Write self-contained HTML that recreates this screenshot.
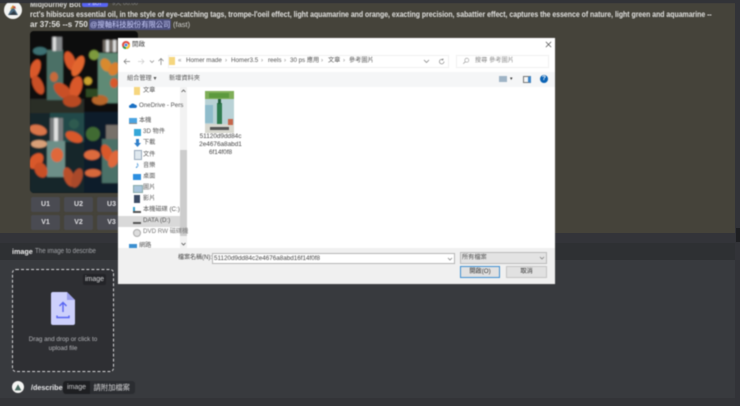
<!DOCTYPE html>
<html><head><meta charset="utf-8"><style>
html,body{margin:0;padding:0;background:#323338}
#p{position:relative;width:740px;height:406px;overflow:hidden;background:#323338;font-family:"Liberation Sans","Noto Sans CJK TC",sans-serif}
#p div{position:absolute;white-space:nowrap}
.t{font-size:6.2px;color:#555;line-height:10px}
.btn{background:#4a4b52;color:#dfdfe2;border-radius:2px;font-size:7px;font-weight:bold;text-align:center;line-height:15px;width:29px;height:15px}
.blur{filter:blur(.4px)}
.sx{transform-origin:left top}
</style></head><body><div id="p">
<div style="left:0;top:3px;width:735px;height:230px;background:#45433a"></div>
<div style="left:0;top:233px;width:735px;height:10px;background:#333439"></div>
<div style="left:0;top:243px;width:735px;height:17px;background:#2e3033"></div>
<div style="left:0;top:260px;width:735px;height:138px;background:#383a3e"></div>
<div style="left:0;top:398px;width:735px;height:8px;background:#333438"></div>
<div style="left:735px;top:0;width:5px;height:406px;background:#323338"></div>
<div style="left:736px;top:228px;width:4px;height:14px;background:#1e1f22"></div>

<div class="blur" style="left:0;top:0;width:740px;height:406px">
<svg style="position:absolute;left:4px;top:1px" width="18" height="18" viewBox="0 0 18 18"><circle cx="9" cy="9" r="9" fill="#f4f4f2"/><path d="M4 14 L9 5 L14 14Z" fill="#4a6a80"/><path d="M6 8 L9 4 L11 7Z" fill="#d9a23a"/><path d="M8 6 L11 5 L12 8Z" fill="#c4483c"/><path d="M5 14 L13 14 L10 10Z" fill="#2f3a44"/></svg>
<div class="sx" style="left:30px;top:-1px;font-size:8.5px;font-weight:bold;color:#d8d8d8;line-height:11px;transform:scaleX(.82)">Midjourney Bot</div>
<div style="left:82px;top:1px;width:26px;height:6px;background:#5865f2;border-radius:2px;color:#e8e8ff;font-size:4.500px;line-height:6px;text-align:center">✓ BOT</div>
<div style="left:112px;top:0;font-size:6px;color:#8e8f92;line-height:9px">9天 00:00</div>
<div style="left:0;top:0;width:735px;height:3px;background:#323338"></div>
<div class="sx" style="left:30px;top:9px;font-size:8.4px;font-weight:bold;color:#e2e2e0;line-height:11px;transform:scaleX(.825)">rct's hibiscus essential oil, in the style of eye-catching tags, trompe-l'oeil effect, light aquamarine and orange, exacting precision, sabattier effect, captures the essence of nature, light green and aquamarine --</div>
<div style="left:30px;top:19px;font-size:8px;font-weight:bold;color:#e2e2e0;line-height:11px">ar 37:56 --s 750 -</div>
<div style="left:89px;top:19px;width:82px;height:11px;background:#4c4f7c;border-radius:2px"></div>
<div style="left:90px;top:19px;font-size:7.300px;color:#c9cdfb;line-height:11px">@搜軸科技股份有限公司</div>
<div style="left:173px;top:19px;font-size:7.500px;color:#d0d0ce;line-height:11px">(fast)</div>

<svg style="position:absolute;left:30px;top:31px;border-radius:4px" width="108" height="162" viewBox="0 0 108 162">
<defs><filter id="f" x="-5%" y="-5%" width="110%" height="110%"><feGaussianBlur stdDeviation=".8"/></filter></defs>
<rect width="108" height="162" fill="#0b0f0e"/>
<g filter="url(#f)">
<rect x="0" y="0" width="108" height="81" fill="#0b100f"/>
<rect x="0" y="81" width="54" height="81" fill="#16282a"/><rect x="20" y="81" width="34" height="30" fill="#244a48"/><rect x="54" y="81" width="54" height="81" fill="#101f2a"/>
<rect x="0" y="68" width="54" height="14" fill="#2a2d28"/>
<rect x="17" y="19" width="16" height="50" fill="#4c6f66"/><rect x="22" y="6" width="10" height="14" fill="#85888a"/><rect x="23" y="6" width="3" height="14" fill="#ddd"/>
<rect x="68" y="22" width="20" height="50" fill="#5e8a74"/><rect x="73" y="9" width="15" height="12" fill="#6f6a62"/><rect x="76" y="9" width="3" height="12" fill="#ddd"/><rect x="83" y="9" width="3" height="12" fill="#ddd"/>
<rect x="17" y="110" width="18" height="36" fill="#6d8f88"/><rect x="20" y="87" width="13" height="23" fill="#777a7c"/><rect x="24" y="87" width="4" height="23" fill="#e0e0e0"/>
<rect x="72" y="108" width="16" height="44" fill="#4b7168"/><rect x="76" y="94" width="12" height="14" fill="#77716a"/>
<g fill="#d9592a">
<ellipse cx="5" cy="38" rx="5" ry="10" transform="rotate(20 5 38)"/><ellipse cx="8" cy="54" rx="5" ry="10" transform="rotate(-25 8 54)" fill="#c94f26"/>
<ellipse cx="40" cy="30" rx="5" ry="10" transform="rotate(-20 40 30)"/><ellipse cx="48" cy="35" rx="5" ry="11" transform="rotate(25 48 35)" fill="#e2662f"/>
<ellipse cx="33" cy="60" rx="6" ry="11" transform="rotate(-50 33 60)" fill="#c94f26"/><ellipse cx="46" cy="56" rx="6" ry="11" transform="rotate(15 46 56)"/><ellipse cx="42" cy="70" rx="9" ry="6" fill="#b84a24"/>
<ellipse cx="24" cy="46" rx="4" ry="5" fill="#c86a3a"/>
<ellipse cx="76" cy="34" rx="5" ry="7" transform="rotate(-30 76 34)" fill="#d98a2e"/><ellipse cx="84" cy="38" rx="5" ry="7" transform="rotate(30 84 38)" fill="#d9802e"/><ellipse cx="84" cy="52" rx="4" ry="5"/><ellipse cx="58" cy="50" rx="4" ry="4" fill="#c9a32e"/><ellipse cx="70" cy="69" rx="8" ry="5" fill="#b8662a"/>
<ellipse cx="8" cy="99" rx="9" ry="5" transform="rotate(15 8 99)" fill="#d9754a"/><ellipse cx="9" cy="113" rx="8" ry="4" fill="#d8a078"/>
<ellipse cx="6" cy="130" rx="6" ry="9" transform="rotate(40 6 130)"/><ellipse cx="11" cy="139" rx="6" ry="8" transform="rotate(-30 11 139)" fill="#c94f26"/>
<ellipse cx="44" cy="106" rx="9" ry="5" transform="rotate(25 44 106)"/><ellipse cx="27" cy="124" rx="6" ry="7" fill="#e0683a"/>
<ellipse cx="39" cy="146" rx="5" ry="10" transform="rotate(-20 39 146)" fill="#b9502c"/><ellipse cx="47" cy="147" rx="5" ry="10" transform="rotate(20 47 147)" fill="#a9482a"/>
<ellipse cx="62" cy="124" rx="8" ry="5" fill="#dc6a3e"/><ellipse cx="63" cy="142" rx="8" ry="4" fill="#d6683a"/><ellipse cx="77" cy="122" rx="5" ry="9" transform="rotate(-25 77 122)"/><ellipse cx="84" cy="128" rx="5" ry="9" transform="rotate(25 84 128)" fill="#e0683a"/>
</g>
<ellipse cx="64" cy="24" rx="5" ry="5" fill="#7d9a3c"/><ellipse cx="63" cy="103" rx="7" ry="7" fill="#3f6a30"/><ellipse cx="44" cy="93" rx="5" ry="5" fill="#2e5a50"/><ellipse cx="10" cy="20" rx="7" ry="4" fill="#3d6f72"/>
<rect x="56" y="58" width="12" height="8" fill="#2f4a24"/>
</g>
</svg>

<div class="btn" style="left:31px;top:197px">U1</div><div class="btn" style="left:64px;top:197px">U2</div><div class="btn" style="left:97px;top:197px">U3</div>
<div class="btn" style="left:31px;top:215px">V1</div><div class="btn" style="left:64px;top:215px">V2</div><div class="btn" style="left:97px;top:215px">V3</div>

<div style="left:12px;top:247px;font-size:7.200px;font-weight:bold;color:#eee;line-height:10px">image</div>
<div class="sx" style="left:35px;top:247px;font-size:7px;color:#a3a5a9;line-height:10px;transform:scaleX(.88)">The image to describe</div>

<div style="left:12px;top:269px;width:100px;height:101px;background:#2e2f33;border:1px dashed #d8d8da;border-radius:4px"></div>
<div style="left:83px;top:274px;width:23px;height:11px;background:#232428;border-radius:2px;color:#d8d8da;font-size:7px;line-height:11px;text-align:center">image</div>
<svg style="position:absolute;left:51px;top:292px" width="24" height="33" viewBox="0 0 24 33"><path d="M2 0H16L24 8V31a2 2 0 0 1-2 2H2a2 2 0 0 1-2-2V2a2 2 0 0 1 2-2Z" fill="#cdd0fb"/><path d="M16 0L24 8H16Z" fill="#9a9ee8"/><path d="M12 20V11M8.500 14L12 10.500L15.500 14M6 23.500V25.500H18V23.500" fill="none" stroke="#5865f2" stroke-width="1.400"/></svg>
<div style="left:13px;top:335px;width:100px;text-align:center;font-size:6.300px;color:#b5b6ba;line-height:9px;white-space:normal">Drag and drop or click to<br>upload file</div>

<svg style="position:absolute;left:12px;top:381px" width="12" height="12" viewBox="0 0 18 18"><circle cx="9" cy="9" r="9" fill="#f4f4f2"/><path d="M4 14 L9 5 L14 14Z" fill="#4a6a60"/></svg>
<div style="left:31px;top:382px;font-size:7.200px;font-weight:bold;color:#e6e6e8;line-height:11px">/describe</div>
<div style="left:63px;top:381px;width:72px;height:13px;background:#2b2d31;border-radius:3px"></div>
<div style="left:63px;top:381px;width:27px;height:13px;background:#1e1f22;border-radius:3px 0 0 3px;color:#c9cacc;font-size:7px;line-height:13px;text-align:center">image</div>
<div style="left:93.500px;top:381px;font-size:7.300px;color:#d6d6d8;line-height:13px">請附加檔案</div>

<!-- dialog -->
<div style="left:118px;top:38px;width:437px;height:246px;background:#fff;box-shadow:0 0 1px #666"></div>
<svg style="position:absolute;left:122px;top:41px" width="8" height="8" viewBox="0 0 8 8"><circle cx="4" cy="4" r="4" fill="#dd4b3e"/><path d="M4 4L0.600 6.200A4 4 0 0 0 7.400 6.200Z" fill="#2f9e4f"/><path d="M4 4L7.900 3A4 4 0 0 1 4 8Z" fill="#f3c13a"/><circle cx="4" cy="4" r="1.700" fill="#3f7ee0" stroke="#fff" stroke-width=".6"/></svg>
<div class="t" style="left:132px;top:40px;font-size:6.500px;color:#444">開啟</div>
<svg style="position:absolute;left:545px;top:41px" width="7" height="7" viewBox="0 0 8 8"><path d="M1 1L7 7M7 1L1 7" stroke="#444" stroke-width=".8"/></svg>
<svg style="position:absolute;left:122px;top:57px" width="44" height="9" viewBox="0 0 44 9" fill="none"><path d="M8 4.500H2M4.500 2L2 4.500L4.500 7" stroke="#777" stroke-width=".7"/><path d="M22 4.500H16M19.500 2L22 4.500L19.500 7" stroke="#ccc" stroke-width=".7"/><path d="M28 3.500L30 5.500L32 3.500" stroke="#888" stroke-width=".7"/><path d="M39 8V1.500M36.500 4L39 1.500L41.500 4" stroke="#777" stroke-width=".7"/></svg>
<div style="left:168px;top:55px;width:281px;height:13px;border:1px solid #f0f0f0;box-sizing:border-box"></div>
<div style="left:169px;top:57px;width:6px;height:8px;background:#f5d67e"></div>
<div class="t" style="left:178px;top:56px;color:#888">«</div>
<div class="t" style="left:186px;top:56px">Homer made</div><div class="t" style="left:225px;top:56px;color:#888">›</div>
<div class="t" style="left:231px;top:56px">Homer3.5</div><div class="t" style="left:261px;top:56px;color:#888">›</div>
<div class="t" style="left:268px;top:56px">reels</div><div class="t" style="left:284px;top:56px;color:#888">›</div>
<div class="t" style="left:290px;top:56px">30 ps 應用</div><div class="t" style="left:321px;top:56px;color:#888">›</div>
<div class="t" style="left:328px;top:56px">文章</div><div class="t" style="left:343px;top:56px;color:#888">›</div>
<div class="t" style="left:349px;top:56px">參考圖片</div>
<svg style="position:absolute;left:423px;top:57px" width="24" height="9" viewBox="0 0 24 9" fill="none"><path d="M1 3L3.500 5.500L6 3" stroke="#777" stroke-width=".7"/><path d="M21 4.500a2.300 2.300 0 1 1-1-1.800M20 1.500V3H18.500" stroke="#777" stroke-width=".6"/></svg>
<div style="left:456px;top:55px;width:93px;height:13px;border:1px solid #f0f0f0;box-sizing:border-box"></div>
<svg style="position:absolute;left:462px;top:57px" width="8" height="8" viewBox="0 0 8 8" fill="none"><circle cx="4.800" cy="3.200" r="2" stroke="#999" stroke-width=".6"/><path d="M3.400 4.600L1.200 6.800" stroke="#999" stroke-width=".7"/></svg>
<div class="t" style="left:475px;top:56px;color:#888">搜尋 參考圖片</div>

<div style="left:118px;top:72px;width:437px;height:15px;background:#f5f6f7"></div>
<div class="t" style="left:127px;top:74px">組合管理 ▾</div>
<div class="t" style="left:169px;top:74px">新增資料夾</div>
<div style="left:499px;top:76px;width:8px;height:6px;background:#9fb4c6"></div>
<div style="left:510px;top:75px;font-size:5px;color:#333;line-height:8px">▾</div>
<div style="left:523px;top:76px;width:4px;height:5px;border:1px solid #777;border-right:3px solid #3f86c8"></div>
<div style="left:540px;top:75px;width:8px;height:8px;border-radius:50%;background:#0b63b5;color:#fff;font-size:6.500px;font-weight:bold;text-align:center;line-height:8px">?</div>

<div style="left:180px;top:87px;width:7px;height:161px;background:#f2f2f2"></div>
<div style="left:180px;top:150px;width:7px;height:86px;background:#cdcdcd"></div>
<div style="left:118px;top:216px;width:62px;height:11px;background:#d9d9d9"></div>
<svg style="position:absolute;left:181px;top:89px" width="5" height="4" viewBox="0 0 5 4"><path d="M.5 3L2.500 1L4.500 3" fill="none" stroke="#555" stroke-width=".8"/></svg>
<svg style="position:absolute;left:181px;top:242px" width="5" height="4" viewBox="0 0 5 4"><path d="M.5 1L2.500 3L4.500 1" fill="none" stroke="#555" stroke-width=".8"/></svg>

<div style="left:134px;top:87px;width:6px;height:8px;background:#f6d67e"></div>
<div class="t" style="left:143px;top:86px">文章</div>
<svg style="position:absolute;left:129px;top:103px" width="8" height="5" viewBox="0 0 8 5"><path d="M1.500 5a1.500 1.500 0 0 1 0-3A2.500 2.500 0 0 1 6 1.800 1.600 1.600 0 0 1 6.500 5Z" fill="#1a70c4"/></svg>
<div class="t" style="left:139px;top:101px">OneDrive - Pers</div>
<div style="left:129px;top:118px;width:8px;height:5px;background:#4ba3e0;border-bottom:1px solid #888"></div>
<div class="t" style="left:139px;top:116px">本機</div>
<div style="left:134px;top:129px;width:7px;height:7px;background:#35a7d8"></div>
<div class="t" style="left:143px;top:127px">3D 物件</div>
<svg style="position:absolute;left:134px;top:139px" width="7" height="8" viewBox="0 0 7 8"><path d="M2 0H5V4H7L3.500 8L0 4H2Z" fill="#2f7fc9"/></svg>
<div class="t" style="left:143px;top:138px">下載</div>
<div style="left:134px;top:150px;width:6px;height:8px;background:#dfe8ee;border:.5px solid #9ab"></div>
<div class="t" style="left:143px;top:150px">文件</div>
<div style="left:135px;top:160px;font-size:9px;color:#1f7fd0;line-height:10px">♪</div>
<div class="t" style="left:143px;top:161px">音樂</div>
<div style="left:133px;top:174px;width:8px;height:6px;background:#2d8fe0"></div>
<div class="t" style="left:143px;top:172px">桌面</div>
<div style="left:133px;top:185px;width:8px;height:6px;background:#a9c5dc;border:.5px solid #8aa"></div>
<div class="t" style="left:143px;top:183px">圖片</div>
<div style="left:134px;top:195px;width:6px;height:8px;background:#3b4a63"></div>
<div class="t" style="left:143px;top:194px">影片</div>
<div style="left:133px;top:207px;width:2px;height:4px;background:#3a9ec9"></div><div style="left:133px;top:211px;width:8px;height:2px;background:#555"></div>
<div class="t" style="left:143px;top:205px">本機磁碟 (C:)</div>
<div style="left:133px;top:222px;width:8px;height:2px;background:#555"></div>
<div class="t" style="left:143px;top:216px">DATA (D:)</div>
<div style="left:133px;top:229px;width:8px;height:8px;border-radius:50%;background:#ddd;border:.5px solid #aaa;box-sizing:border-box"></div>
<div class="t" style="left:143px;top:227px;color:#777">DVD RW 磁碟機</div>
<div style="left:129px;top:244px;width:8px;height:4px;background:#3b8fd0"></div>
<div class="t" style="left:139px;top:241px">網路</div>

<svg style="position:absolute;left:205px;top:91px" width="29" height="42" viewBox="0 0 29 42"><rect width="29" height="42" fill="#b9d2d6"/><rect width="29" height="8" fill="#7fae58"/><rect x="4" y="2" width="20" height="5" fill="#5d9a3e"/><rect x="12" y="12" width="5" height="21" fill="#2e7a4e"/><rect x="13" y="8" width="3" height="5" fill="#26603e"/><rect x="0" y="33" width="29" height="9" fill="#d8d8cf"/><rect x="5" y="36" width="19" height="3" fill="#555"/><rect x="23" y="28" width="5" height="6" fill="#c6664a"/><rect x="0" y="14" width="8" height="18" fill="#8fbccb"/></svg>
<div style="left:197px;top:133px;width:47px;text-align:center;font-size:6.400px;color:#444;line-height:7.800px;white-space:normal">51120d9dd84c<br>2e4676a8abd1<br>6f14f0f8</div>

<div style="left:118px;top:248px;width:437px;height:36px;background:#f0f0f0"></div>
<div class="t" style="left:178px;top:253px;font-size:6px;color:#444">檔案名稱(N):</div>
<div style="left:212px;top:253px;width:243px;height:11px;background:#fff;border:1px solid #b5b5b5;box-sizing:border-box"></div>
<div class="t" style="left:214px;top:254px;font-size:6.300px;color:#444;line-height:9px">51120d9dd84c2e4676a8abd16f14f0f8</div>
<svg style="position:absolute;left:447px;top:257px" width="6" height="4" viewBox="0 0 6 4"><path d="M1 1L3 3L5 1" fill="none" stroke="#777" stroke-width=".7"/></svg>
<div style="left:460px;top:252px;width:87px;height:12px;background:#e3e3e3;border:1px solid #bbb;box-sizing:border-box"></div>
<div class="t" style="left:462px;top:253px">所有檔案</div>
<svg style="position:absolute;left:539px;top:256px" width="6" height="4" viewBox="0 0 6 4"><path d="M1 1L3 3L5 1" fill="none" stroke="#777" stroke-width=".7"/></svg>
<div style="left:460px;top:266px;width:40px;height:12px;background:#e1e1e1;border:1px solid #3f8fd0;box-sizing:border-box;text-align:center;font-size:6.200px;color:#333;line-height:10px">開啟(O)</div>
<div style="left:506px;top:266px;width:41px;height:12px;background:#e1e1e1;border:1px solid #c4c4c4;box-sizing:border-box;text-align:center;font-size:6.200px;color:#333;line-height:10px">取消</div>
</div>
</div></body></html>
